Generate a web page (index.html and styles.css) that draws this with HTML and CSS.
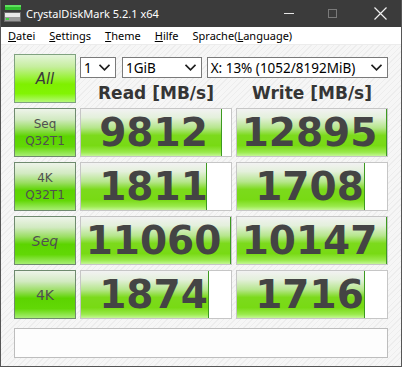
FILE: index.html
```html
<!DOCTYPE html>
<html lang="de">
<head>
    <meta charset="UTF-8">
    <title>CrystalDiskMark 5.2.1 x64</title>
    <link rel="stylesheet" href="styles.css">
</head>
<body>
    <div class="window">
        <div class="titlebar">
            <svg class="app-icon" width="17" height="17" viewBox="0 0 17 17">
                <rect x="1" y="0" width="16" height="5" fill="#2fbf2f"/>
                <rect x="1" y="0" width="16" height="2" fill="#5fe05f"/>
                <rect x="0" y="7" width="17" height="10" fill="#6a6a6a"/>
                <rect x="1" y="8" width="15" height="4" fill="#e8e8e8"/>
                <rect x="1" y="12" width="15" height="4" fill="#9a9a9a"/>
                <rect x="2" y="13" width="3" height="2" fill="#3fd03f"/>
            </svg>
            <span class="title">CrystalDiskMark 5.2.1 x64</span>
            <div class="controls">
                <span class="ctl ctl-min"></span>
                <span class="ctl ctl-max"></span>
                <svg class="ctl-close" width="13" height="13" viewBox="0 0 13 13">
                    <path d="M0.5 0.5 L12.5 12.5 M12.5 0.5 L0.5 12.5" stroke="#f0f0f0" stroke-width="1.2"/>
                </svg>
            </div>
        </div>

        <div class="menubar">
            <span><u>D</u>atei</span>
            <span><u>S</u>ettings</span>
            <span><u>T</u>heme</span>
            <span><u>H</u>ilfe</span>
            <span>Sprache(<u>L</u>anguage)</span>
        </div>

        <div class="main">
            <div class="table">
                <div class="btn btn-all">All</div>
                <div class="head">
                    <div class="combos">
                        <div class="combo combo-count">
                            <span>1</span>
                            <svg width="11" height="7" viewBox="0 0 11 7"><polyline points="0.5,0.8 5.5,5.8 10.5,0.8" fill="none" stroke="#1e1e1e" stroke-width="1.7"/></svg>
                        </div>
                        <div class="combo combo-size">
                            <span>1GiB</span>
                            <svg width="11" height="7" viewBox="0 0 11 7"><polyline points="0.5,0.8 5.5,5.8 10.5,0.8" fill="none" stroke="#1e1e1e" stroke-width="1.7"/></svg>
                        </div>
                        <div class="combo combo-drive">
                            <span>X: 13% (1052/8192MiB)</span>
                            <svg width="11" height="7" viewBox="0 0 11 7"><polyline points="0.5,0.8 5.5,5.8 10.5,0.8" fill="none" stroke="#1e1e1e" stroke-width="1.7"/></svg>
                        </div>
                    </div>
                    <div class="col-titles">
                        <div>Read [MB/s]</div>
                        <div>Write [MB/s]</div>
                    </div>
                </div>

                <div class="btn btn-label small">Seq<br>Q32T1</div>
                <div class="value"><div class="fill" style="width: 94%"></div><div class="num">9812</div></div>
                <div class="value"><div class="fill" style="width: 100%"></div><div class="num">12895</div></div>

                <div class="btn btn-label small">4K<br>Q32T1</div>
                <div class="value"><div class="fill" style="width: 84%"></div><div class="num">1811</div></div>
                <div class="value"><div class="fill" style="width: 85%"></div><div class="num">1708</div></div>

                <div class="btn btn-label slant">Seq</div>
                <div class="value"><div class="fill" style="width: 100%"></div><div class="num">11060</div></div>
                <div class="value"><div class="fill" style="width: 100%"></div><div class="num">10147</div></div>

                <div class="btn btn-label">4K</div>
                <div class="value"><div class="fill" style="width: 85%"></div><div class="num">1874</div></div>
                <div class="value"><div class="fill" style="width: 85%"></div><div class="num">1716</div></div>
            </div>

            <div class="status"></div>
        </div>
    </div>
</body>
</html>
```

FILE: styles.css
```css
body {
    margin: 0;
    font-family: "Noto Sans", sans-serif;
}

.window {
    width: 402px;
    height: 367px;
    box-sizing: border-box;
    border: 1px solid #565656;
    border-top: none;
    display: flex;
    flex-direction: column;
    overflow: hidden;
}

.titlebar {
    height: 27px;
    flex: none;
    background-color: #3b3b3b;
    display: flex;
    align-items: center;
    margin: 0 -1px;
}

.app-icon {
    margin-left: 4px;
    margin-top: -1px;
}

.title {
    color: #ffffff;
    font-size: 11px;
    margin-left: 5px;
    margin-top: -1px;
}

.controls {
    margin-left: auto;
    display: flex;
    align-items: center;
}

.ctl-min {
    width: 10px;
    height: 1px;
    background: #e6e6e6;
    margin-right: 34px;
}

.ctl-max {
    width: 9px;
    height: 9px;
    box-sizing: border-box;
    border: 1px solid #7a7a7a;
    margin-right: 37px;
}

.ctl-close {
    margin-right: 15px;
}

.menubar {
    height: 17px;
    flex: none;
    background: #ffffff;
    border-bottom: 1px solid #ececec;
    display: flex;
    gap: 14px;
    padding-left: 7px;
    font-size: 11px;
    line-height: 18px;
    color: #000;
}

.main {
    flex: 1;
    padding: 9px 0 0 13px;
    background: repeating-linear-gradient(135deg, #f6f6f6 0, #f6f6f6 3px, #ededed 3px, #ededed 4px);
}

.table {
    display: grid;
    grid-template-columns: 62px 152px 152px;
    grid-auto-rows: 49px;
    column-gap: 4px;
    row-gap: 5px;
}

.btn {
    box-sizing: border-box;
    display: flex;
    align-items: center;
    justify-content: center;
    text-align: center;
    font-family: "DejaVu Sans", sans-serif;
    color: #505050;
}

.btn-all {
    border: 1px solid #7fa27f;
    font-size: 15px;
    font-style: italic;
    color: #3a3a3a;
    background: linear-gradient(to bottom, #e4f4da 0%, #c6ee9e 25%, #9af23a 48%, #7ff000 62%, #82f404 82%, #b4f878 100%);
}

.btn-label {
    border: 1px solid #6f8a6f;
    font-size: 14px;
    background: linear-gradient(to bottom, #eef4ea 0%, #d2eac2 22%, #9ade62 42%, #5cd400 58%, #62d806 80%, #a8ee74 100%);
}

.btn-label.small {
    font-size: 12px;
    line-height: 17px;
}

.btn-label.slant {
    font-style: italic;
}

.head {
    grid-column: 2 / 4;
    display: flex;
    flex-direction: column;
}

.combos {
    display: flex;
    margin-top: 3px;
}

.combo {
    height: 21px;
    box-sizing: border-box;
    border: 1px solid #7a7a7a;
    background: #ffffff;
    display: flex;
    align-items: center;
    justify-content: space-between;
    padding: 0 5px 0 3px;
    font-size: 13.5px;
    color: #000;
}

.combo-count {
    width: 36px;
}

.combo-size {
    width: 80px;
    margin-left: 6px;
}

.combo-drive {
    width: 182px;
    margin-left: 5px;
}

.col-titles {
    display: grid;
    grid-template-columns: 152px 152px;
    column-gap: 4px;
    flex: 1;
    align-items: center;
    padding-top: 5px;
}

.col-titles div {
    text-align: center;
    font-family: "DejaVu Sans", sans-serif;
    font-weight: bold;
    font-size: 17px;
    color: #353535;
}

.value {
    box-sizing: border-box;
    border: 1px solid #c6c6c6;
    background: #ffffff;
    display: grid;
}

.fill {
    grid-area: 1 / 1;
    box-sizing: border-box;
    border-right: 1px solid #3c9a20;
    background: linear-gradient(to bottom, #f2f2f2 0%, #e4f0dc 18%, #b6e68c 40%, #7cda1c 56%, #78da14 78%, #9aea4c 92%, #c4f696 100%);
}

.num {
    grid-area: 1 / 1;
    display: flex;
    align-items: center;
    justify-content: center;
    padding-right: 5px;
    font-family: "DejaVu Sans", sans-serif;
    font-weight: bold;
    font-size: 39px;
    color: #444444;
}

.status {
    width: 374px;
    height: 30px;
    box-sizing: border-box;
    margin-top: 9px;
    border: 1px solid #bdbdbd;
    background: #fdfdfd;
}
```
